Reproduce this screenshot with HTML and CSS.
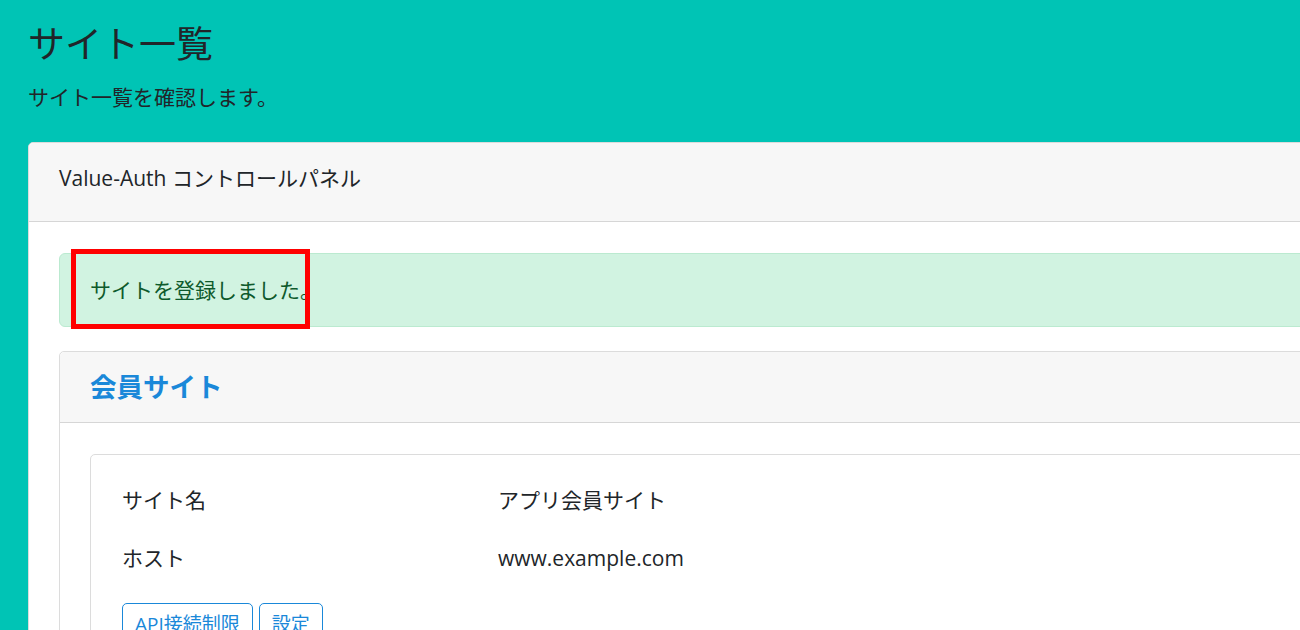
FILE: index.html
```html
<!DOCTYPE html>
<html lang="ja">

<head>
    <meta charset="UTF-8">
    <meta name="viewport" content="width=device-width, initial-scale=1.0">
    <title>サイト一覧</title>
    <link rel="stylesheet" href="styles.css">
</head>

<body>
    <div class="page">
        <h1 class="page-title">サイト一覧</h1>
        <p class="page-lead">サイト一覧を確認します。</p>

        <div class="card">
            <div class="card-header">Value-Auth コントロールパネル</div>
            <div class="card-body">
                <div class="alert">
                    サイトを登録しました。
                    <span class="highlight"></span>
                </div>

                <div class="card site-card">
                    <div class="card-header site-title">会員サイト</div>
                    <div class="card-body">
                        <div class="card detail-card">
                            <div class="detail-row">
                                <div class="detail-label">サイト名</div>
                                <div class="detail-value">アプリ会員サイト</div>
                            </div>
                            <div class="detail-row">
                                <div class="detail-label">ホスト</div>
                                <div class="detail-value">www.example.com</div>
                            </div>
                            <div class="actions">
                                <a href="#" class="btn">API接続制限</a>
                                <a href="#" class="btn">設定</a>
                            </div>
                        </div>
                    </div>
                </div>
            </div>
        </div>
    </div>
</body>

</html>
```

FILE: styles.css
```css
html,
body {
    margin: 0;
    height: 100%;
    overflow: hidden;
}

body {
    background-color: #00c4b5;
    color: #212529;
    font-family: "Open Sans", "Noto Sans CJK JP", sans-serif;
    font-size: 21px;
    line-height: 30px;
}

.page {
    width: 1330px;
    padding: 22px 0 0 28px;
}

.page-title {
    margin: 0;
    font-size: 37px;
    line-height: 43px;
    font-weight: 400;
}

.page-lead {
    margin: 17px 0 30px;
}

.card {
    background-color: #fff;
    border: 1px solid #dcdcdc;
    border-radius: 5px;
}

.card-header {
    background-color: #f7f7f7;
    border-bottom: 1px solid #d6d6d6;
    border-radius: 5px 5px 0 0;
    padding: 20px 30px 28px;
}

.card-body {
    padding: 31px 0 0 30px;
}

.alert {
    position: relative;
    background-color: #d1f3e1;
    border: 1px solid #bbead0;
    border-radius: 6px;
    color: #0e5a2c;
    padding: 21px 30px;
    margin-bottom: 24px;
}

.highlight {
    position: absolute;
    left: 11px;
    top: -5px;
    width: 229px;
    height: 70px;
    border: 5px solid #ff0000;
}

.site-title {
    color: #1a88d9;
    font-size: 26.5px;
    font-weight: 700;
    line-height: 36px;
    padding: 17px 30px;
}

.detail-card {
    padding: 30px 0 0 31px;
    height: 200px;
}

.detail-row {
    display: flex;
    margin-bottom: 28px;
}

.detail-label {
    width: 376px;
}

.actions {
    display: flex;
    gap: 6px;
    padding-top: 2px;
}

.btn {
    display: inline-block;
    border: 1px solid #1a88d9;
    border-radius: 5px;
    color: #1a88d9;
    font-size: 19px;
    line-height: 30px;
    padding: 5px 12px;
    text-decoration: none;
}
```
